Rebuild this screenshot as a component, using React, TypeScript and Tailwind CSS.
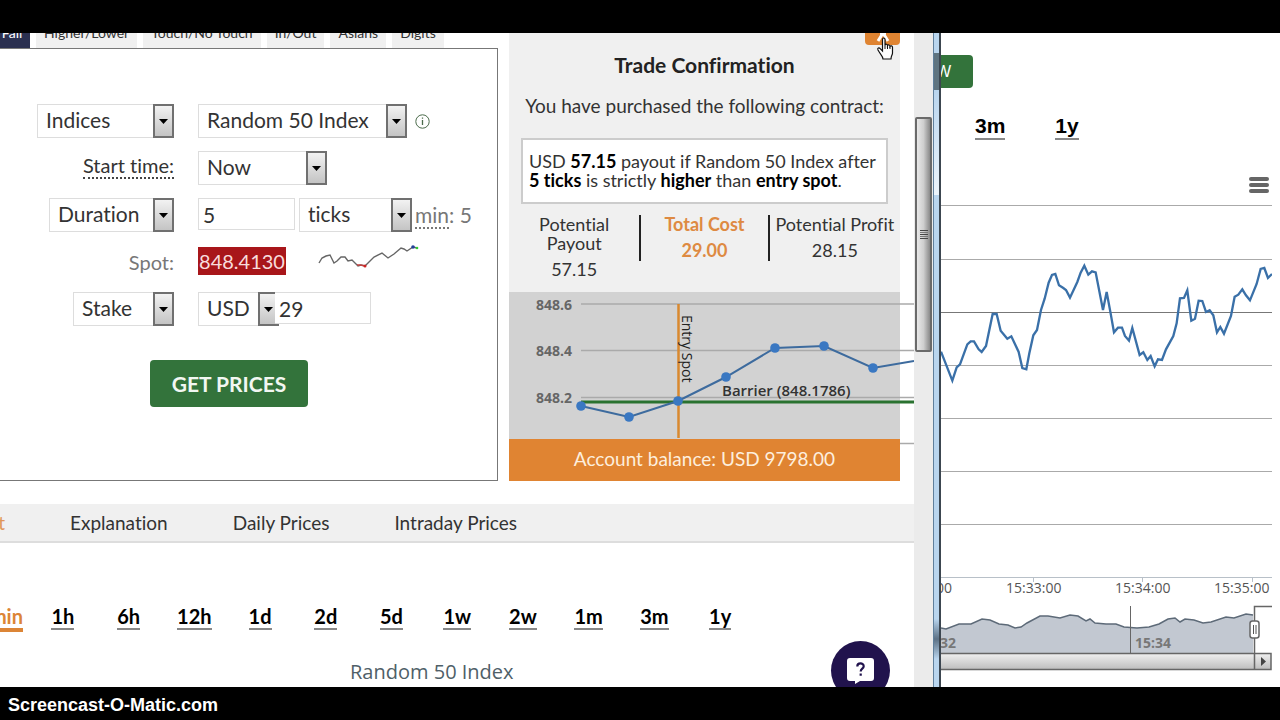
import type { ReactNode } from 'react';

const contractTabs = ['Higher/Lower', 'Touch/No Touch', 'In/Out', 'Asians', 'Digits'];
const infoTabs = ['Explanation', 'Daily Prices', 'Intraday Prices'];
const ranges = ['1h', '6h', '12h', '1d', '2d', '5d', '1w', '2w', '1m', '3m', '1y'];

const ticks = [
  [72, 114],
  [120, 125],
  [169, 109],
  [217, 85],
  [266, 56],
  [315, 54],
  [364, 76],
];

type SelectProps = {
  label: string;
  value: string;
  width: string;
};

function Select({ label, value, width }: SelectProps) {
  return (
    <span className={`relative inline-block h-[34px] shrink-0 ${width}`}>
      <select
        aria-label={label}
        className="h-full w-full appearance-none border border-[#dddddd] bg-white pb-[2px] pl-2 text-[21px] leading-6 text-[#333333]"
      >
        <option>{value}</option>
      </select>
      <span className="pointer-events-none absolute inset-y-0 right-0 flex w-[21px] items-center justify-center border-2 border-[#707070] bg-linear-to-b from-[#f2f2f2] to-[#c4c4c4]">
        <svg width="9" height="5" viewBox="0 0 9 5">
          <path d="M0 0h9L4.5 5z" fill="#000" />
        </svg>
      </span>
    </span>
  );
}

function Row({ label, children }: { label: ReactNode; children: ReactNode }) {
  return (
    <>
      <div className="flex h-[34px] items-start justify-end">{label}</div>
      <div className="flex h-[34px] items-start">{children}</div>
    </>
  );
}

function Sparkline() {
  return (
    <svg className="ml-8 overflow-visible" width="102" height="28" viewBox="0 0 102 28" fill="none">
      <path
        d="M1 18L4 13L8 11L12 10L16 18L19 16L23 12L27 12L30 16L34 15L40 21L43 20L47 21L50 18L56 12L64 8L70 13L76 9L83 3L86 4L89 6L95 2L99 3"
        stroke="#666"
        strokeWidth="1.400"
      />
      <path d="M39 20l3 0 6 1" stroke="#c4403f" strokeWidth="1.400" />
      <circle cx="47" cy="21" r="1.500" fill="#c22" />
      <circle cx="95" cy="2" r="1.800" fill="#22409a" />
      <circle cx="99" cy="3" r="1.300" fill="#3c3" />
    </svg>
  );
}

function TradeForm() {
  return (
    <form className="flex-1 border-y border-r border-[#777777] pt-[55px] text-xl leading-6 text-[#333333]">
      <div className="grid grid-cols-[174px_1fr] gap-x-6 gap-y-[13px]">
        <Row label={<Select label="Market" value="Indices" width="w-[137px]" />}>
          <Select label="Underlying" value="Random 50 Index" width="w-[209px]" />
          <svg
            className="ml-2 self-center"
            width="15"
            height="15"
            viewBox="0 0 15 15"
            fill="none"
            stroke="#4b6b4b"
          >
            <circle cx="7.500" cy="7.500" r="6.700" />
            <path d="M7.500 6v5M7.500 3.500v1.300" strokeWidth="1.300" />
          </svg>
        </Row>
        <Row label={<span className="mt-[2px] border-b-2 border-dotted border-[#444444]">Start time:</span>}>
          <Select label="Start time" value="Now" width="w-[129px]" />
        </Row>
        <Row label={<Select label="Expiry type" value="Duration" width="w-[125px]" />}>
          <input
            aria-label="Duration"
            defaultValue="5"
            className="mr-1 h-8 w-[97px] border border-[#dddddd] bg-white px-1 text-[21px]"
          />
          <Select label="Duration unit" value="ticks" width="w-[113px]" />
          <span className="ml-[3px] self-center text-[21px] text-[#777777]">
            <span className="border-b-2 border-dotted border-[#777777]">min</span>: 5
          </span>
        </Row>
        <Row label={<span className="self-center text-[#777777]">Spot:</span>}>
          <output className="mt-[2px] flex h-7 w-[88px] items-center justify-center bg-[#a8161a] text-[#f8dcdc]">
            848.4130
          </output>
          <Sparkline />
        </Row>
        <Row label={<Select label="Amount type" value="Stake" width="w-[101px]" />}>
          <Select label="Currency" value="USD" width="w-[81px]" />
          <input
            aria-label="Amount"
            defaultValue="29"
            className="relative -ml-1 h-8 w-24 border border-l-0 border-[#dddddd] bg-white px-1 text-[21px]"
          />
        </Row>
      </div>
      <button
        type="button"
        className="mt-[34px] ml-[150px] h-[47px] w-[158px] rounded-sm bg-[#33733b] text-[21px] font-bold text-[#f2f7f2]"
      >
        GET PRICES
      </button>
    </form>
  );
}

function TickChart() {
  return (
    <div className="h-[147px] bg-[#d2d2d2]">
      <svg
        className="overflow-visible font-['Open_Sans',sans-serif] font-bold"
        width="405"
        height="147"
        viewBox="0 0 405 147"
      >
        <path d="M72 12H405M72 58.500H405M72 105.500H405M391 151.500H405" stroke="#aaa" strokeWidth="1.500" />
        <g fontSize="14" fill="#666">
          <text x="27" y="18">848.6</text>
          <text x="27" y="64">848.4</text>
          <text x="27" y="111">848.2</text>
        </g>
        <path d="M169.500 12V146" stroke="#d9892f" strokeWidth="2.500" />
        <path d="M72 110H405" stroke="#2a7230" strokeWidth="3" />
        <path
          d="M72 114L120 125L169 109L217 85L266 56L315 54L364 76L405 69"
          fill="none"
          stroke="#3d6b9e"
          strokeWidth="2"
        />
        {ticks.map(([x, y]) => (
          <circle key={x} cx={x} cy={y} r="4.800" fill="#3a78c2" />
        ))}
        <text x="213" y="104" fontSize="15" fontWeight="600" fill="#333">
          Barrier (848.1786)
        </text>
        <text transform="translate(173 23) rotate(90)" fontSize="14" fontWeight="400" fill="#222">
          Entry Spot
        </text>
      </svg>
    </div>
  );
}

function TradeConfirmation() {
  return (
    <section className="relative flex w-[391px] shrink-0 flex-col bg-[#f0f0f0] text-lg leading-[19px] text-[#333333]">
      <button
        type="button"
        aria-label="Close"
        className="absolute top-0 right-0 flex h-3 w-[35px] items-end justify-center rounded-b-sm bg-[#df8432]"
      >
        <svg width="14" height="12" viewBox="0 0 14 12">
          <path d="M2 8L7 0l5 8M4 0h6" stroke="#fff" strokeWidth="3" fill="none" />
        </svg>
      </button>
      <svg className="absolute top-1 right-1.5" width="18" height="24" viewBox="0 0 18 24">
        <path
          d="M6.500 14V2.500c0-2 2.500-2 2.500 0V8c.5-1.200 2.500-1 2.500.5.6-1 2.500-.7 2.500.8.6-.9 2.500-.6 2.500 1V16c0 2-1.500 3-1.500 6H7c0-3-3-5-5-9-.9-2 1-2.800 2.200-1.300z"
          fill="#fff"
          stroke="#111"
          strokeWidth="1.200"
        />
        <path d="M9 8v4M11.500 8.500V12M14 9.500V12" stroke="#111" />
      </svg>

      <h2 className="mt-5 text-center text-[21px] leading-6 font-bold text-[#222222]">Trade Confirmation</h2>
      <p className="mt-[17px] text-center text-[19px] leading-6">You have purchased the following contract:</p>
      <p className="mx-3 mt-5 border-2 border-[#cccccc] bg-white px-[6px] py-3 whitespace-nowrap">
        USD <b className="text-black">57.15</b> payout if Random 50 Index after
        <br />
        <b className="text-black">5 ticks</b> is strictly <b className="text-black">higher</b> than{' '}
        <b className="text-black">entry spot</b>.
      </p>
      <dl className="mt-[11px] grid grid-cols-3 pb-[13px] text-center">
        <div className="px-4">
          <dt>Potential Payout</dt>
          <dd className="mt-[7px]">57.15</dd>
        </div>
        <div className="h-[46px] border-x-2 border-[#222222] font-bold text-[#de8a42]">
          <dt>Total Cost</dt>
          <dd className="mt-[7px]">29.00</dd>
        </div>
        <div className="whitespace-nowrap">
          <dt>Potential Profit</dt>
          <dd className="mt-[7px]">28.15</dd>
        </div>
      </dl>
      <TickChart />
      <p className="relative h-[42px] bg-[#e08432] text-center text-[19px] leading-10 text-[#fdeedd]">
        Account balance: USD 9798.00
      </p>
    </section>
  );
}

function ChatButton() {
  return (
    <button
      type="button"
      aria-label="Help"
      className="absolute right-6 -bottom-[13px] flex size-[59px] items-center justify-center rounded-full bg-[#21134d]"
    >
      <svg width="27" height="26" viewBox="0 0 27 26">
        <path d="M3 0h21a3 3 0 0 1 3 3v17a3 3 0 0 1-3 3H13l-5 3v-3H3a3 3 0 0 1-3-3V3a3 3 0 0 1 3-3z" fill="#fff" />
        <path
          d="M10.300 8.500c0-4 6.400-4 6.400-.3 0 2.600-3 2.300-3 5.300M13.700 15.500v2.200"
          fill="none"
          stroke="#21134d"
          strokeWidth="2.200"
        />
      </svg>
    </button>
  );
}

function TradingWindow() {
  return (
    <div className="flex min-w-0 font-[Lato,sans-serif] [font-variant-ligatures:none]">
      <div className="relative min-w-0 flex-1 overflow-hidden">
        <div className="flex gap-[11px] pr-[14px]">
          <div className="flex min-w-0 flex-1 flex-col">
            <div className="flex h-[15px] items-end gap-[6px] overflow-hidden text-sm leading-[30px] text-[#333333]">
              <button type="button" className="h-[30px] w-[30px] shrink-0 bg-[#2b3050] pr-[6px] text-white">
                Fall
              </button>
              {contractTabs.map((tab) => (
                <button key={tab} type="button" className="h-[30px] shrink-0 bg-[#f0f0f0] px-2">
                  {tab}
                </button>
              ))}
            </div>
            <TradeForm />
          </div>
          <TradeConfirmation />
        </div>

        <nav className="mt-[23px] flex h-[39px] items-center gap-[65px] border-b-2 border-[#dddddd] bg-[#f0f0f0] text-[19px] leading-6 whitespace-nowrap text-[#333333]">
          <a href="#chart" className="flex w-[5px] justify-end overflow-hidden text-[#e0975a]">
            Chart
          </a>
          {infoTabs.map((tab) => (
            <a key={tab} href="#info">
              {tab}
            </a>
          ))}
        </nav>

        <div className="mt-[61px] flex items-start text-xl leading-6 font-bold text-black">
          <a href="#min" className="flex w-[23px] justify-end overflow-hidden border-b-4 border-[#dc8536] text-[#dc8536]">
            min
          </a>
          <div className="ml-[7px] grid w-[723px] grid-cols-11 justify-items-center">
            {ranges.map((range) => (
              <a key={range} href="#range" className="border-b-2 border-[#888888]">
                {range}
              </a>
            ))}
          </div>
        </div>
        <h3 className="mt-7 ml-[350px] font-['Open_Sans',sans-serif] text-xl leading-6 text-[#4f6068]">
          Random 50 Index
        </h3>
        <ChatButton />
      </div>

      {/* window scrollbar */}
      <div className="w-[19px] shrink-0 bg-[#ebebeb] px-px pt-[84px]">
        <div className="flex h-[235px] flex-col items-center justify-center gap-px rounded-xs border-2 border-[#6a6a6a] bg-linear-to-r from-[#e8e8e8] via-[#cfcfcf] to-[#8a8a8a]">
          <span className="h-px w-2 bg-[#444444]" />
          <span className="h-px w-2 bg-[#777777]" />
          <span className="h-px w-2 bg-[#444444]" />
          <span className="h-px w-2 bg-[#777777]" />
          <span className="h-px w-2 bg-[#444444]" />
        </div>
      </div>
      {/* glass frame, darker where the page behind shows through */}
      <div className="flex w-2 shrink-0 flex-col border-r-2 border-l border-r-[#3c4650] border-l-[#5f7f9c] bg-[#b9d5ee]">
        <div className="h-5" />
        <div className="h-[37px] bg-[#5f7480]" />
        <div className="h-[105px] bg-linear-to-b from-[#b9d5ee] to-[#edf4fb]" />
        <div className="flex-1" />
        <div className="mb-7 h-10 bg-linear-to-b from-[#b9d5ee] via-[#5d7286] to-[#b9d5ee]" />
      </div>
    </div>
  );
}

function PriceChart() {
  return (
    <svg className="mt-[3px] w-full font-['Open_Sans',sans-serif]" viewBox="0 0 331 480" fill="none">
      <path
        d="M0 9.500H331M0 63.500H331M0 169.500H331M0 222.500H331M0 275.500H331M0 328.500H331"
        stroke="#aaa"
      />
      <path d="M0 116.500H331" stroke="#777" />
      <path d="M0 381.500H331M92.500 381v5M201.500 381v5M311.500 381v5" stroke="#b8c0c8" />
      <g transform="translate(-11 44) scale(.3333)">
        <path
          d="M33 335L67 422L80 382L90 373L112 313L122 304L132 304L146 328L155 336L168 318L188 222L200 222L212 272L232 296L244 289L266 336L277 384L289 388L298 340L310 286L321 270L333 210L344 176L356 128L366 105L376 102L387 136L400 144L408 150L420 173L442 126L452 98L463 77L475 104L486 94L497 97L519 210L530 156L541 215L552 277L564 263L576 263L585 288L597 302L607 264L629 345L640 337L652 360L662 348L674 379L684 358L696 360L708 328L730 288L740 250L750 175L762 174L772 151L784 242L795 236L806 182L817 183L828 216L839 211L850 226L861 277L871 261L882 281L903 228L914 170L925 164L937 148L948 166L960 181L980 132L992 87L1003 84L1014 114L1026 102"
          stroke="#3a70a8"
          strokeWidth="7"
        />
      </g>

      <g fontSize="14" fill="#555">
        <text x="-5" y="397">00</text>
        <text x="65" y="397">15:33:00</text>
        <text x="174" y="397">15:34:00</text>
        <text x="273" y="397">15:35:00</text>
      </g>

      {/* navigator */}
      <path
        d="M0 432l5 1 13-5 12 0 11-5 8 1 9 4 9 1 7 3 6-1 6-4 13-7 8 0 12 2 10-3 8 1 8 5 4-2 5 4 11 1 5 0 5 0 8 3 13 1 12-1 10-3 9-5 7-1 5 4 5-3 9 1 9 3 8-1 15-5 8 1 12-4 7 1V457H0z"
        fill="#c2c8d1"
      />
      <path
        d="M0 432l5 1 13-5 12 0 11-5 8 1 9 4 9 1 7 3 6-1 6-4 13-7 8 0 12 2 10-3 8 1 8 5 4-2 5 4 11 1 5 0 5 0 8 3 13 1 12-1 10-3 9-5 7-1 5 4 5-3 9 1 9 3 8-1 15-5 8 1 12-4 7 1"
        stroke="#5d6a78"
        strokeWidth="1.500"
      />
      <path d="M189.500 410V457" stroke="#666" />
      <g fontSize="14" fontWeight="700" fill="#777">
        <text x="-1" y="452">32</text>
        <text x="194" y="452">15:34</text>
      </g>
      <defs>
        <linearGradient id="bar" x1="0" y1="0" x2="0" y2="1">
          <stop offset="0" stopColor="#f0f0f0" />
          <stop offset="1" stopColor="#bdbdbd" />
        </linearGradient>
      </defs>
      <rect x="-2" y="457.500" width="332" height="16" fill="url(#bar)" stroke="#666" strokeWidth="1.500" />
      <path d="M313.500 474V410.500H331" stroke="#666" strokeWidth="1.500" />
      <path d="M320 461v9l5-4.500z" fill="#444" />
      <rect x="309" y="425" width="9" height="17" rx="2.500" fill="#fff" stroke="#666" strokeWidth="1.500" />
      <path d="M312.500 429v9M315 429v9" stroke="#555" />
    </svg>
  );
}

function ChartWindow() {
  return (
    <div className="min-w-0 overflow-hidden bg-white pt-[22px] pr-2 font-['Liberation_Sans',sans-serif]">
      <button
        type="button"
        className="flex h-[33px] w-8 items-center justify-end overflow-hidden rounded-r-sm bg-[#33733b] pr-[22px] text-base text-white"
      >
        W
      </button>
      <div className="mt-[26px] ml-[34px] flex gap-[50px] text-[21px] leading-6 font-bold text-black">
        <a href="#3m" className="border-b-2 border-[#888888]">3m</a>
        <a href="#1y" className="border-b-2 border-[#888888]">1y</a>
      </div>
      <button type="button" aria-label="Chart menu" className="mt-[37px] mr-[3px] ml-auto flex w-5 flex-col gap-[2px]">
        <span className="h-1 w-full rounded-full bg-[#666666]" />
        <span className="h-1 w-full rounded-full bg-[#666666]" />
        <span className="h-1 w-full rounded-full bg-[#666666]" />
      </button>
      <PriceChart />
    </div>
  );
}

export default function App() {
  return (
    <div className="flex min-h-screen flex-col bg-black">
      <main className="mt-[33px] grid flex-1 grid-cols-[941fr_339fr] overflow-hidden bg-white">
        <TradingWindow />
        <ChartWindow />
      </main>
      <footer className="flex h-[33px] items-center px-2 pt-[2px] font-['Liberation_Sans',sans-serif] text-lg leading-6 font-bold text-white">
        Screencast-O-Matic.com
      </footer>
    </div>
  );
}
